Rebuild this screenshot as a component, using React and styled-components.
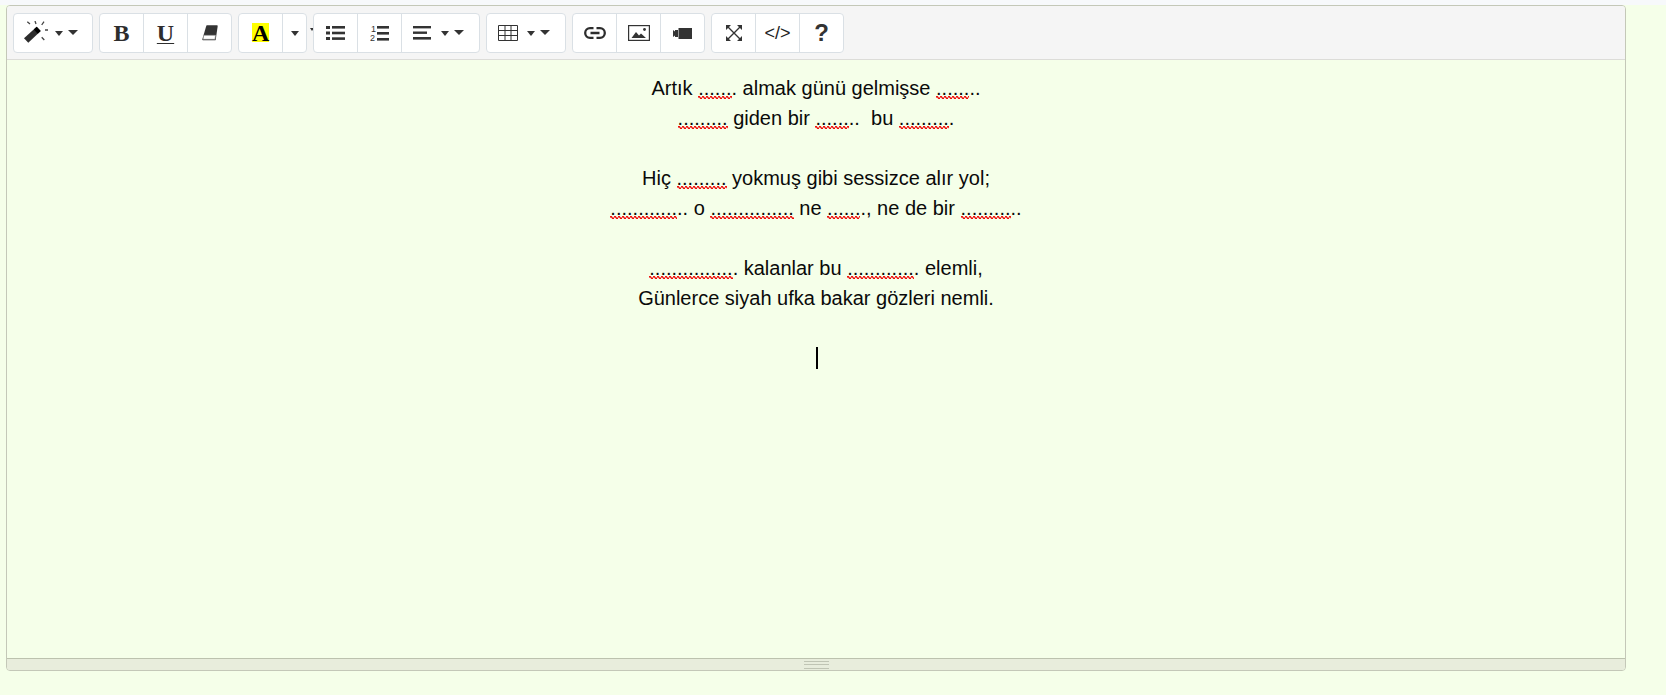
import React from "react";
import styled, { createGlobalStyle } from "styled-components";

const Global = createGlobalStyle`
  html, body { margin: 0; padding: 0; background: #f5ffe9; }
  #root { min-height: 695px; }
`;
const Page = styled.div`
  height: 695px;
  overflow: hidden;
  box-sizing: border-box;
  padding: 5px 40px 0 6px;
  background: linear-gradient(#f7f9fb 5px, #f5ffe9 5px);
  font-family: "Liberation Sans", Arial, sans-serif;
`;
const Editor = styled.div`
  box-sizing: border-box;
  width: 1620px;
  height: 666px;
  border: 1px solid #c4c8b8;
  border-radius: 4px;
  display: flex;
  flex-direction: column;
  overflow: hidden;
`;
const Toolbar = styled.div`
  box-sizing: border-box;
  height: 54px;
  flex: none;
  background: #f5f5f5;
  border-bottom: 1px solid #dcdcd8;
  padding: 7px 0 0 6px;
  display: flex;
  align-items: flex-start;
  gap: 6px;
`;
const Group = styled.div`
  position: relative;
  display: flex;
  height: 40px;
  background: #fff;
  border: 1px solid #dae0e5;
  border-radius: 4px;
  box-sizing: border-box;
`;
const Btn = styled.div`
  box-sizing: border-box;
  width: ${(p) => p.$w ?? 44}px;
  height: 100%;
  display: flex;
  align-items: center;
  justify-content: center;
  color: #333;
  & + & { border-left: 1px solid #dae0e5; }
`;
const DropBtn = styled(Btn)`
  justify-content: flex-start;
  padding-left: ${(p) => p.$pl ?? 11}px;
  gap: ${(p) => p.$g ?? 9}px;
`;
const Caret = styled.span`
  flex: none;
  display: inline-block;
  width: 0;
  height: 0;
  border-left: ${(p) => p.$s ?? 5}px solid transparent;
  border-right: ${(p) => p.$s ?? 5}px solid transparent;
  border-top: 5px solid #333;
  margin-left: ${(p) => p.$ml ?? 0}px;
  transform: translateY(${(p) => p.$y ?? 0}px);
`;
const Clipped = styled.span`
  position: absolute;
  right: -8px;
  top: 14px;
  width: 0;
  height: 0;
  border-left: 2px solid transparent;
  border-right: 2px solid transparent;
  border-top: 3px solid #333;
`;
const Bold = styled.span`
  font: bold 24px "Liberation Serif", serif;
  color: #2d2d2d;
  line-height: 1;
`;
const Under = styled(Bold)`
  text-decoration: underline;
  text-underline-offset: 2px;
  text-decoration-thickness: 1px;
`;
const Hilite = styled.span`
  font: bold 24px/21px "Liberation Serif", serif;
  color: #000;
  background: #ff0;
  display: block;
  width: 17px;
  height: 19px;
  text-align: center;
  transform: translateY(-1px);
`;
const Code = styled.span`
  font-size: 18px;
  color: #222;
`;
const Help = styled.span`
  font-size: 24px;
  font-weight: bold;
  color: #333;
`;
const Content = styled.div`
  flex: 1;
  background: #f5ffe9;
  padding-top: 13px;
  text-align: center;
  font-size: 20px;
  line-height: 30px;
  color: #0a0a0a;
`;
const Line = styled.div`
  min-height: 30px;
  white-space: pre;
`;
const wave =
  "data:image/svg+xml,%3Csvg xmlns='http://www.w3.org/2000/svg' width='4' height='3'%3E%3Cpath d='M0 1.5Q1 -.5 2 1.5T4 1.5' fill='none' stroke='%23f00000' stroke-width='1.3'/%3E%3C/svg%3E";
const Spell = styled.span`
  background-image: url("${wave}");
  background-repeat: repeat-x;
  background-size: 4px 3px;
  background-position: 0 19px;
`;
const CaretMark = styled.div`
  width: 2px;
  height: 22px;
  background: #000;
  margin: 4px 0 0 809px;
`;
const Status = styled.div`
  box-sizing: border-box;
  height: 12px;
  flex: none;
  background: #e8eddc;
  border-top: 1px solid #bcc2ae;
  display: flex;
  justify-content: center;
  padding-top: 2px;
`;
const Grip = styled.div`
  width: 25px;
  height: 6px;
  border-top: 1px solid #c0c5b4;
  border-bottom: 1px solid #c0c5b4;
  &::after { content: ""; display: block; height: 1px; margin-top: 2px; background: #c0c5b4; }
`;

const S = ({ w = 24, h = 24, children }) => (
  <svg width={w} height={h} viewBox={`0 0 ${w} ${h}`} fill="#333" style={{ flex: "none" }}>{children}</svg>
);
const Wand = () => (
  <S w={24} h={24}>
    <path d="M0 17.3 12.7 5.7 16.7 10 4.3 21.7z" fill="#2d2d2d" />
    <path d="M9.8 8.4 12.7 5.7 16.7 10 13.8 12.7z" fill="#000" />
    <path d="M3.3.7 6 3M11 0l1 3M20 .7 17.7 4M21 9h3M17.7 16.3l2.6 2.7" stroke="#444" strokeWidth="1.3" fill="none" />
  </S>
);
const Eraser = () => (
  <S w={16} h={16}>
    <path d="M4.3.8Q4.5.3 5 .3H15q.8 0 .7.8l-2 13.6q-.1.6-.7.6H1q-.8 0-.7-.8z" fill="#333" />
    <path d="M1.7 10.3h11.9l-.7 4H1.1z" fill="#fff" stroke="#888" strokeWidth=".6" />
  </S>
);
const Ul = () => (
  <S w={19} h={16}>
    <rect x="0" y="1" width="4" height="3" />
    <rect x="0" y="6.5" width="4" height="3" />
    <rect x="0" y="12" width="4" height="3" />
    <rect x="6" y="1" width="13" height="2.6" />
    <rect x="6" y="6.7" width="13" height="2.6" />
    <rect x="6" y="12.3" width="13" height="2.6" />
  </S>
);
const Ol = () => (
  <S w={19} h={19}>
    <rect x="7" y="2" width="12" height="2.6" />
    <rect x="7" y="8" width="12" height="2.6" />
    <rect x="7" y="14" width="12" height="2.6" />
    <text x="1" y="8.3" fontSize="9" fontFamily="Liberation Sans">1</text>
    <text x="0" y="16.8" fontSize="9" fontFamily="Liberation Sans">2</text>
  </S>
);
const Align = () => (
  <S w={18} h={14}>
    <rect y="0" width="18" height="2.4" />
    <rect y="5.5" width="14" height="2.4" />
    <rect y="11" width="18" height="2.6" />
  </S>
);
const Table = () => (
  <S w={20} h={16}>
    <path d="M.5.5h19v15H.5zM.5 5.5h19M.5 10.5h19M7 .5v15M13 .5v15" fill="none" stroke="#333" strokeWidth="1" />
  </S>
);
const Link = () => (
  <S w={22} h={12}>
    <path d="M9.5 1.2H6a4.8 4.8 0 0 0 0 9.6h3.5M12.5 1.2H16a4.8 4.8 0 0 1 0 9.6h-3.5M6.5 6h9" fill="none" stroke="#2d2d2d" strokeWidth="2.3" />
  </S>
);
const Picture = () => (
  <S w={22} h={16}>
    <rect x=".6" y=".6" width="20.8" height="14.8" fill="none" stroke="#333" strokeWidth="1.2" />
    <path d="M3.5 13l4.5-6 3 3.5 2-2 5 4.5z" />
    <circle cx="16.5" cy="4.5" r="1.4" />
  </S>
);
const Video = () => (
  <S w={19} h={11}>
    <rect x="5.5" y="0" width="13.5" height="11" />
    <path d="M0 2l2 1.5V2h3v7H2V7.5L0 9z" />
  </S>
);
const Full = () => (
  <S w={16} h={16}>
    <path d="M2 2l12 12M14 2 2 14" stroke="#333" strokeWidth="1.4" fill="none" />
    <path d="M0 0h5L0 5zM16 0v5l-5-5zM0 16v-5l5 5zM16 16h-5l5-5z" />
  </S>
);

export default function App() {
  return (
    <Page>
      <Global />
      <Editor>
        <Toolbar>
          <Group>
            <DropBtn $w={78} $pl={10} $g={7}><Wand /><Caret $s={4.5} /><Caret $ml={-2} $y={-1} /></DropBtn>
          </Group>
          <Group>
            <Btn $w={43}><Bold>B</Bold></Btn>
            <Btn><Under>U</Under></Btn>
            <Btn><Eraser /></Btn>
          </Group>
          <Group>
            <Btn $w={43}><Hilite>A</Hilite></Btn>
            <Btn $w={24}><Caret $s={4.5} /></Btn>
            <Clipped />
          </Group>
          <Group>
            <Btn $w={43}><Ul /></Btn>
            <Btn><Ol /></Btn>
            <DropBtn $w={78} $g={10}><Align /><Caret $s={4.5} /><Caret $ml={-5} $y={-1} /></DropBtn>
          </Group>
          <Group>
            <DropBtn $w={78} $g={9}><Table /><Caret $s={4.5} /><Caret $ml={-4} $y={-1} /></DropBtn>
          </Group>
          <Group>
            <Btn $w={43}><Link /></Btn>
            <Btn><Picture /></Btn>
            <Btn><Video /></Btn>
          </Group>
          <Group>
            <Btn $w={43}><Full /></Btn>
            <Btn><Code>&lt;/&gt;</Code></Btn>
            <Btn><Help>?</Help></Btn>
          </Group>
        </Toolbar>
        <Content>
          <Line>Artık <Spell>......</Spell>. almak günü gelmişse <Spell>......</Spell>..</Line>
          <Line><Spell>.........</Spell> giden bir <Spell>......</Spell>..  bu <Spell>.........</Spell>.</Line>
          <Line />
          <Line>Hiç <Spell>.........</Spell> yokmuş gibi sessizce alır yol;</Line>
          <Line><Spell>............</Spell>.. o <Spell>...............</Spell> ne <Spell>......</Spell>., ne de bir <Spell>.........</Spell>..</Line>
          <Line />
          <Line><Spell>...............</Spell>. kalanlar bu <Spell>............</Spell>. elemli,</Line>
          <Line>Günlerce siyah ufka bakar gözleri nemli.</Line>
          <Line />
          <CaretMark />
        </Content>
        <Status><Grip /></Status>
      </Editor>
    </Page>
  );
}
